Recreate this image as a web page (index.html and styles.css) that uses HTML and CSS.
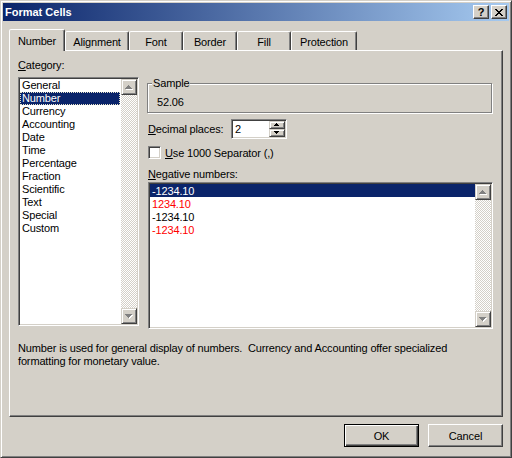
FILE: index.html
```html
<!DOCTYPE html>
<html>
<head>
<meta charset="utf-8">
<link rel="stylesheet" href="styles.css">
</head>
<body>
<div class="window">
  <div class="titlebar">
    <span class="title">Format Cells</span>
    <div class="tbtns">
      <span class="tbtn help">?</span>
      <span class="tbtn"><svg width="8" height="7" viewBox="0 0 8 7"><path fill="#000" d="M0 0h2v1H0zM6 0h2v1H6zM1 1h2v1H1zM5 1h2v1H5zM2 2h4v1H2zM3 3h2v1H3zM2 4h4v1H2zM1 5h2v1H1zM5 5h2v1H5zM0 6h2v1H0zM6 6h2v1H6z"/></svg></span>
    </div>
  </div>

  <div class="tabs">
    <div class="tab sel w-number">Number</div>
    <div class="tab w-align">Alignment</div>
    <div class="tab w-font">Font</div>
    <div class="tab w-border">Border</div>
    <div class="tab w-fill">Fill</div>
    <div class="tab w-prot">Protection</div>
  </div>

  <div class="panel">
    <div class="cols">
      <div class="left">
        <div class="lbl"><u>C</u>ategory:</div>
        <div class="listbox cat">
          <div class="items">
            <div class="item">General</div>
            <div class="item sel focus">Number</div>
            <div class="item">Currency</div>
            <div class="item">Accounting</div>
            <div class="item">Date</div>
            <div class="item">Time</div>
            <div class="item">Percentage</div>
            <div class="item">Fraction</div>
            <div class="item">Scientific</div>
            <div class="item">Text</div>
            <div class="item">Special</div>
            <div class="item">Custom</div>
          </div>
          <div class="vscroll">
            <div class="sbtn"><svg width="14" height="14" viewBox="0 0 14 14"><path fill="#fff" d="M7 6h1v1H7zM6 7h3v1H6zM5 8h5v1H5zM4 9h7v1H4z"/><path fill="#808080" d="M6 5h1v1H6zM5 6h3v1H5zM4 7h5v1H4zM3 8h7v1H3z"/></svg></div>
            <div class="track"></div>
            <div class="sbtn"><svg width="14" height="14" viewBox="0 0 14 14"><path fill="#fff" d="M4 6h7v1H4zM5 7h5v1H5zM6 8h3v1H6zM7 9h1v1H7z"/><path fill="#808080" d="M3 5h7v1H3zM4 6h5v1H4zM5 7h3v1H5zM6 8h1v1H6z"/></svg></div>
          </div>
        </div>
      </div>

      <div class="right">
        <div class="group">
          <div class="legend">Sample</div>
          <div class="sample">52.06</div>
        </div>
        <div class="drow">
          <span class="dlabel"><u>D</u>ecimal places:</span>
          <div class="spin">
            <div class="spinval">2</div>
            <div class="spinbtns">
              <div class="sbtn half"><svg width="14" height="6" viewBox="0 0 14 6"><path fill="#000" d="M6 1h1v1H6zM5 2h3v1H5zM4 3h5v1H4z"/></svg></div>
              <div class="sbtn half"><svg width="14" height="6" viewBox="0 0 14 6"><path fill="#000" d="M4 1h5v1H4zM5 2h3v1H5zM6 3h1v1H6z"/></svg></div>
            </div>
          </div>
        </div>
        <div class="crow">
          <span class="cb"></span>
          <span><u>U</u>se 1000 Separator (,)</span>
        </div>
        <div class="lbl nlbl"><u>N</u>egative numbers:</div>
        <div class="listbox neg">
          <div class="items">
            <div class="item sel">-1234.10</div>
            <div class="item red">1234.10</div>
            <div class="item">-1234.10</div>
            <div class="item red">-1234.10</div>
          </div>
          <div class="vscroll">
            <div class="sbtn"><svg width="14" height="14" viewBox="0 0 14 14"><path fill="#fff" d="M7 6h1v1H7zM6 7h3v1H6zM5 8h5v1H5zM4 9h7v1H4z"/><path fill="#808080" d="M6 5h1v1H6zM5 6h3v1H5zM4 7h5v1H4zM3 8h7v1H3z"/></svg></div>
            <div class="track"></div>
            <div class="sbtn"><svg width="14" height="14" viewBox="0 0 14 14"><path fill="#fff" d="M4 6h7v1H4zM5 7h5v1H5zM6 8h3v1H6zM7 9h1v1H7z"/><path fill="#808080" d="M3 5h7v1H3zM4 6h5v1H4zM5 7h3v1H5zM6 8h1v1H6z"/></svg></div>
          </div>
        </div>
      </div>
    </div>
    <p class="desc">Number is used for general display of numbers.&nbsp; Currency and Accounting offer specialized<br>formatting for monetary value.</p>
  </div>

  <div class="buttons">
    <div class="btn default">OK</div>
    <div class="btn">Cancel</div>
  </div>
</div>
</body>
</html>
```

FILE: styles.css
```css
* { box-sizing: border-box; }
html, body { margin: 0; padding: 0; }
body {
  font-family: "Liberation Sans", Arial, sans-serif;
  font-size: 11px;
  letter-spacing: -0.15px;
  color: #000;
  background: #d4d0c8;
}

.window {
  width: 512px;
  height: 458px;
  background: #d4d0c8;
  border: 1px solid;
  border-color: #d4d0c8 #404040 #404040 #d4d0c8;
  box-shadow: inset 1px 1px #fff, inset -1px -1px #808080;
  padding: 2px;
  display: flex;
  flex-direction: column;
}

.titlebar {
  height: 18px;
  flex: none;
  background: linear-gradient(to right, #0a246a, #a6caf0);
  display: flex;
  align-items: center;
  justify-content: space-between;
  padding: 0 2px;
}
.title { color: #fff; font-weight: bold; font-size: 11px; letter-spacing: 0; }
.tbtns { display: flex; gap: 2px; }
.tbtn {
  width: 16px;
  height: 14px;
  background: #d4d0c8;
  border: 1px solid;
  border-color: #fff #404040 #404040 #fff;
  box-shadow: inset -1px -1px #808080;
  display: flex;
  align-items: center;
  justify-content: center;
  font-weight: bold;
  font-size: 11px;
  line-height: 12px;
}
.tbtn svg { display: block; }

.tabs {
  display: flex;
  align-items: flex-end;
  height: 21px;
  margin: 8px 0 0 6px;
  position: relative;
  z-index: 1;
  flex: none;
}
.tab {
  height: 19px;
  background: #d4d0c8;
  border: 1px solid;
  border-bottom: none;
  border-color: #fff #404040 transparent #fff;
  border-radius: 2px 2px 0 0;
  box-shadow: inset -1px 0 #808080;
  display: flex;
  align-items: center;
  justify-content: center;
  padding-top: 2px;
}
.tab.sel { height: 22px; margin-bottom: -1px; padding-top: 1px; }
.w-number { width: 56px; }
.w-align { width: 64px; }
.w-font { width: 54px; }
.w-border { width: 54px; }
.w-fill { width: 54px; }
.w-prot { width: 66px; }

.panel {
  flex: none;
  margin: 0 6px;
  height: 367px;
  border: 1px solid;
  border-color: #fff #404040 #404040 #fff;
  box-shadow: inset -1px -1px #808080;
  padding: 8px 8px 0 8px;
}

.cols {
  display: grid;
  grid-template-columns: 121px 345px;
  column-gap: 9px;
  align-items: start;
}

.lbl { height: 13px; line-height: 13px; margin-bottom: 5px; white-space: nowrap; }

.listbox {
  background: #fff;
  border: 1px solid;
  border-color: #808080 #fff #fff #808080;
  box-shadow: inset 1px 1px #404040, inset -1px -1px #d4d0c8;
  padding: 1px;
  display: flex;
}
.cat { width: 121px; height: 249px; }
.neg { width: 345px; height: 147px; }
.items { flex: 1; min-width: 0; }
.cat .items { padding-right: 1px; }
.item { height: 13px; line-height: 13px; padding-left: 2px; white-space: nowrap; }
.neg .item { line-height: 14px; }
.item.sel { background: #0a246a; color: #fff; }
.item.focus { outline: 1px dotted #e8e4c8; outline-offset: -1px; }
.item.red { color: #ff0000; }

.vscroll { width: 16px; flex: none; display: flex; flex-direction: column; }
.sbtn {
  width: 16px;
  height: 16px;
  flex: none;
  background: #d4d0c8;
  border: 1px solid;
  border-color: #d4d0c8 #404040 #404040 #d4d0c8;
  box-shadow: inset 1px 1px #fff, inset -1px -1px #808080;
}
.sbtn svg { display: block; }
.sbtn.half { height: 8px; }
.track {
  flex: 1;
  background-color: #fff;
  background-image: conic-gradient(#d4d0c8 25%, #fff 0 50%, #d4d0c8 0 75%, #fff 0);
  background-size: 2px 2px;
}

.group {
  margin: 24px 0 0 -1px;
  width: 345px;
  height: 30px;
  border: 1px solid #808080;
  box-shadow: 1px 1px 0 #fff, inset 1px 1px 0 #fff;
}
.legend {
  width: fit-content;
  margin: -7px 0 0 4px;
  padding: 0 1px;
  height: 13px;
  line-height: 13px;
  background: #d4d0c8;
}
.sample { margin: 6px 0 0 9px; height: 13px; line-height: 13px; }

.drow { display: flex; align-items: center; height: 20px; margin-top: 6px; }
.dlabel { width: 83px; white-space: nowrap; }
.spin {
  width: 56px;
  height: 20px;
  background: #fff;
  border: 1px solid;
  border-color: #808080 #fff #fff #808080;
  box-shadow: inset 1px 1px #404040, inset -1px -1px #d4d0c8;
  padding: 1px;
  display: flex;
}
.spinval { flex: 1; padding-left: 2px; line-height: 16px; }
.spinbtns { width: 16px; display: flex; flex-direction: column; }

.crow { display: flex; align-items: center; height: 13px; margin-top: 7px; gap: 4px; }
.cb {
  width: 13px;
  height: 13px;
  flex: none;
  background: #fff;
  border: 1px solid;
  border-color: #808080 #fff #fff #808080;
  box-shadow: inset 1px 1px #404040, inset -1px -1px #d4d0c8;
}
.nlbl { margin-top: 9px; margin-bottom: 1px; }

.desc { margin: 13px 0 0 0; line-height: 13px; white-space: nowrap; }

.buttons {
  display: flex;
  justify-content: flex-end;
  gap: 9px;
  margin: 7px 6px 0 0;
  flex: none;
}
.btn {
  width: 75px;
  height: 23px;
  background: #d4d0c8;
  border: 1px solid;
  border-color: #fff #404040 #404040 #fff;
  box-shadow: inset -1px -1px #808080;
  display: flex;
  align-items: center;
  justify-content: center;
}
.btn.default {
  border-color: #000;
  box-shadow: inset 1px 1px #fff, inset -1px -1px #404040, inset -2px -2px #808080;
}
```
